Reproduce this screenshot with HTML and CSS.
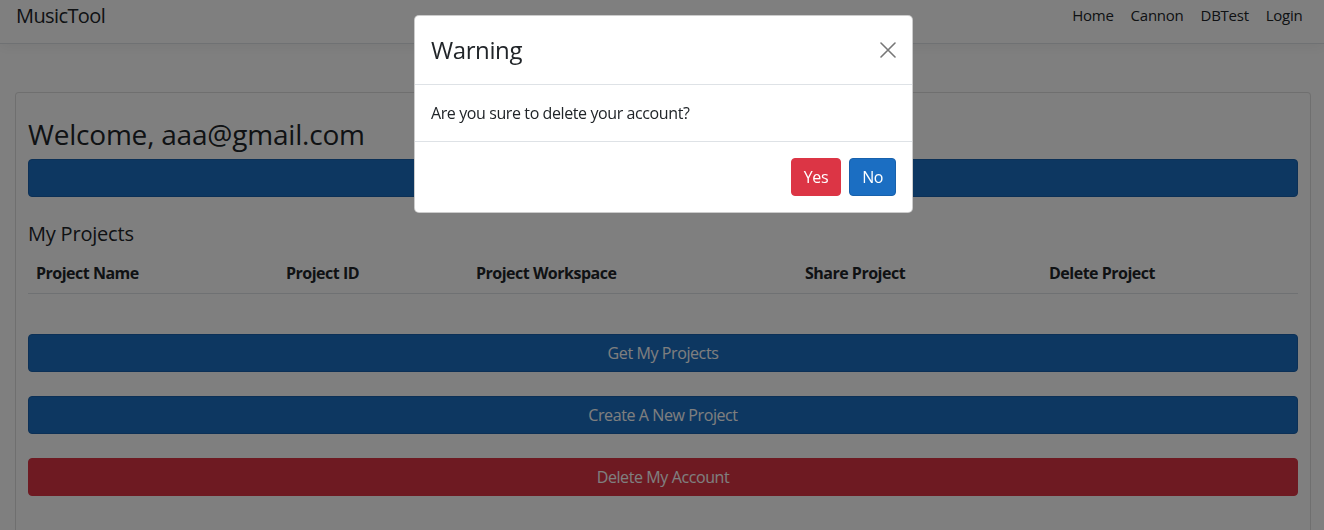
FILE: index.html
```html
<!DOCTYPE html>
<html lang="en">
<head>
<meta charset="utf-8">
<title>MusicTool</title>
<link rel="stylesheet" href="styles.css">
</head>
<body>
<header class="navbar">
  <a class="brand" href="#">MusicTool</a>
  <nav class="nav">
    <a class="nav-link" href="#">Home</a>
    <a class="nav-link" href="#">Cannon</a>
    <a class="nav-link" href="#">DBTest</a>
    <a class="nav-link" href="#">Login</a>
  </nav>
</header>

<main class="page">
  <section class="card">
    <h3 class="welcome">Welcome, aaa@gmail.com</h3>
    <button class="btn btn-primary btn-block">Log Out</button>

    <h5 class="section-title">My Projects</h5>
    <table class="table">
      <colgroup>
        <col class="c-name">
        <col class="c-id">
        <col class="c-ws">
        <col class="c-share">
        <col class="c-del">
      </colgroup>
      <thead>
        <tr>
          <th>Project Name</th>
          <th>Project ID</th>
          <th>Project Workspace</th>
          <th>Share Project</th>
          <th>Delete Project</th>
        </tr>
      </thead>
      <tbody></tbody>
    </table>

    <div class="actions">
      <button class="btn btn-primary btn-block">Get My Projects</button>
      <button class="btn btn-primary btn-block">Create A New Project</button>
      <button class="btn btn-danger btn-block">Delete My Account</button>
    </div>
  </section>
</main>

<div class="modal-backdrop"></div>
<div class="modal">
  <div class="modal-dialog">
    <div class="modal-header">
      <h4 class="modal-title">Warning</h4>
      <button class="btn-close" aria-label="Close">
        <svg width="16" height="16" viewBox="0 0 16 16" aria-hidden="true">
          <path d="M1 1 L15 15 M15 1 L1 15" stroke="#777" stroke-width="1.6" fill="none" stroke-linecap="round"/>
        </svg>
      </button>
    </div>
    <div class="modal-body">Are you sure to delete your account?</div>
    <div class="modal-footer">
      <button class="btn btn-danger">Yes</button>
      <button class="btn btn-primary">No</button>
    </div>
  </div>
</div>
</body>
</html>
```

FILE: styles.css
```css
* { box-sizing: border-box; }

html, body {
  margin: 0;
  padding: 0;
}

body {
  font-family: "Open Sans", "Noto Sans", "Liberation Sans", sans-serif;
  font-size: 16px;
  line-height: 1.5;
  color: #212529;
  background: #fff;
  height: 530px;
  overflow: hidden;
}

a { text-decoration: none; color: #212529; }

/* Navbar */
.navbar {
  display: flex;
  align-items: flex-start;
  justify-content: space-between;
  height: 44px;
  padding: 0 13px 0 16px;
  border-bottom: 1px solid #dee2e6;
  box-shadow: 0 4px 12px rgba(0, 0, 0, 0.05);
  background: #fff;
}

.brand {
  font-size: 20px;
  line-height: 30px;
  padding-top: 1px;
  letter-spacing: -0.6px;
  color: #212529;
}

.nav {
  display: flex;
  padding-top: 3px;
}

.nav-link {
  font-size: 15px;
  line-height: 24px;
  padding: 0 8.5px;
  letter-spacing: -0.25px;
  color: #212529;
}

/* Page */
.page {
  padding: 48px 13px 0 15px;
}

.card {
  border: 1px solid rgba(0, 0, 0, 0.125);
  border-radius: 4px;
  padding: 12px 12px 60px;
  background: #fff;
}

.welcome {
  margin: 12px 0 8px;
  font-size: 28px;
  font-weight: 500;
  line-height: 34px;
  letter-spacing: -0.2px;
}

.section-title {
  margin: 25px 0 7px;
  font-size: 20px;
  font-weight: 500;
  line-height: 24px;
  letter-spacing: -0.2px;
}

.table {
  width: 100%;
  border-collapse: collapse;
  table-layout: fixed;
  margin: 0;
}

.table th {
  text-align: left;
  font-weight: 700;
  padding: 8px;
  line-height: 24px;
  letter-spacing: -0.5px;
  border-bottom: 1px solid #dee2e6;
}

.c-name { width: 250px; }
.c-id { width: 190px; }
.c-ws { width: 329px; }
.c-share { width: 244px; }
.c-del { width: 257px; }

.actions {
  display: flex;
  flex-direction: column;
  gap: 24px;
  margin-top: 40px;
}

/* Buttons */
.btn {
  display: inline-block;
  font-family: inherit;
  font-size: 16px;
  line-height: 24px;
  padding: 6px 12px;
  border: 1px solid transparent;
  border-radius: 4px;
  color: #fff;
  text-align: center;
  letter-spacing: -0.4px;
  cursor: pointer;
}

.btn-primary {
  background: #1b6ec2;
  border-color: #1861ac;
}

.btn-danger {
  background: #dc3545;
  border-color: #dc3545;
}

.btn-block {
  display: block;
  width: 100%;
}

/* Modal */
.modal-backdrop {
  position: fixed;
  inset: 0;
  background: rgba(0, 0, 0, 0.5);
}

.modal {
  position: fixed;
  inset: 0;
}

.modal-dialog {
  width: 499px;
  margin: 15px 0 0 414px;
  background: #fff;
  border: 1px solid rgba(0, 0, 0, 0.2);
  border-radius: 5px;
}

.modal-header {
  display: flex;
  align-items: center;
  justify-content: space-between;
  padding: 16px;
  border-bottom: 1px solid #dee2e6;
}

.modal-title {
  margin: 0;
  font-size: 24px;
  font-weight: 500;
  line-height: 36px;
  letter-spacing: -0.4px;
}

.btn-close {
  display: flex;
  width: 16px;
  height: 16px;
  padding: 0;
  border: 0;
  background: transparent;
  cursor: pointer;
}

.modal-body {
  padding: 16px;
  line-height: 24px;
  letter-spacing: -0.4px;
}

.modal-footer {
  display: flex;
  justify-content: flex-end;
  padding: 12px;
  border-top: 1px solid #dee2e6;
}

.modal-footer .btn {
  margin: 4px;
}
```
